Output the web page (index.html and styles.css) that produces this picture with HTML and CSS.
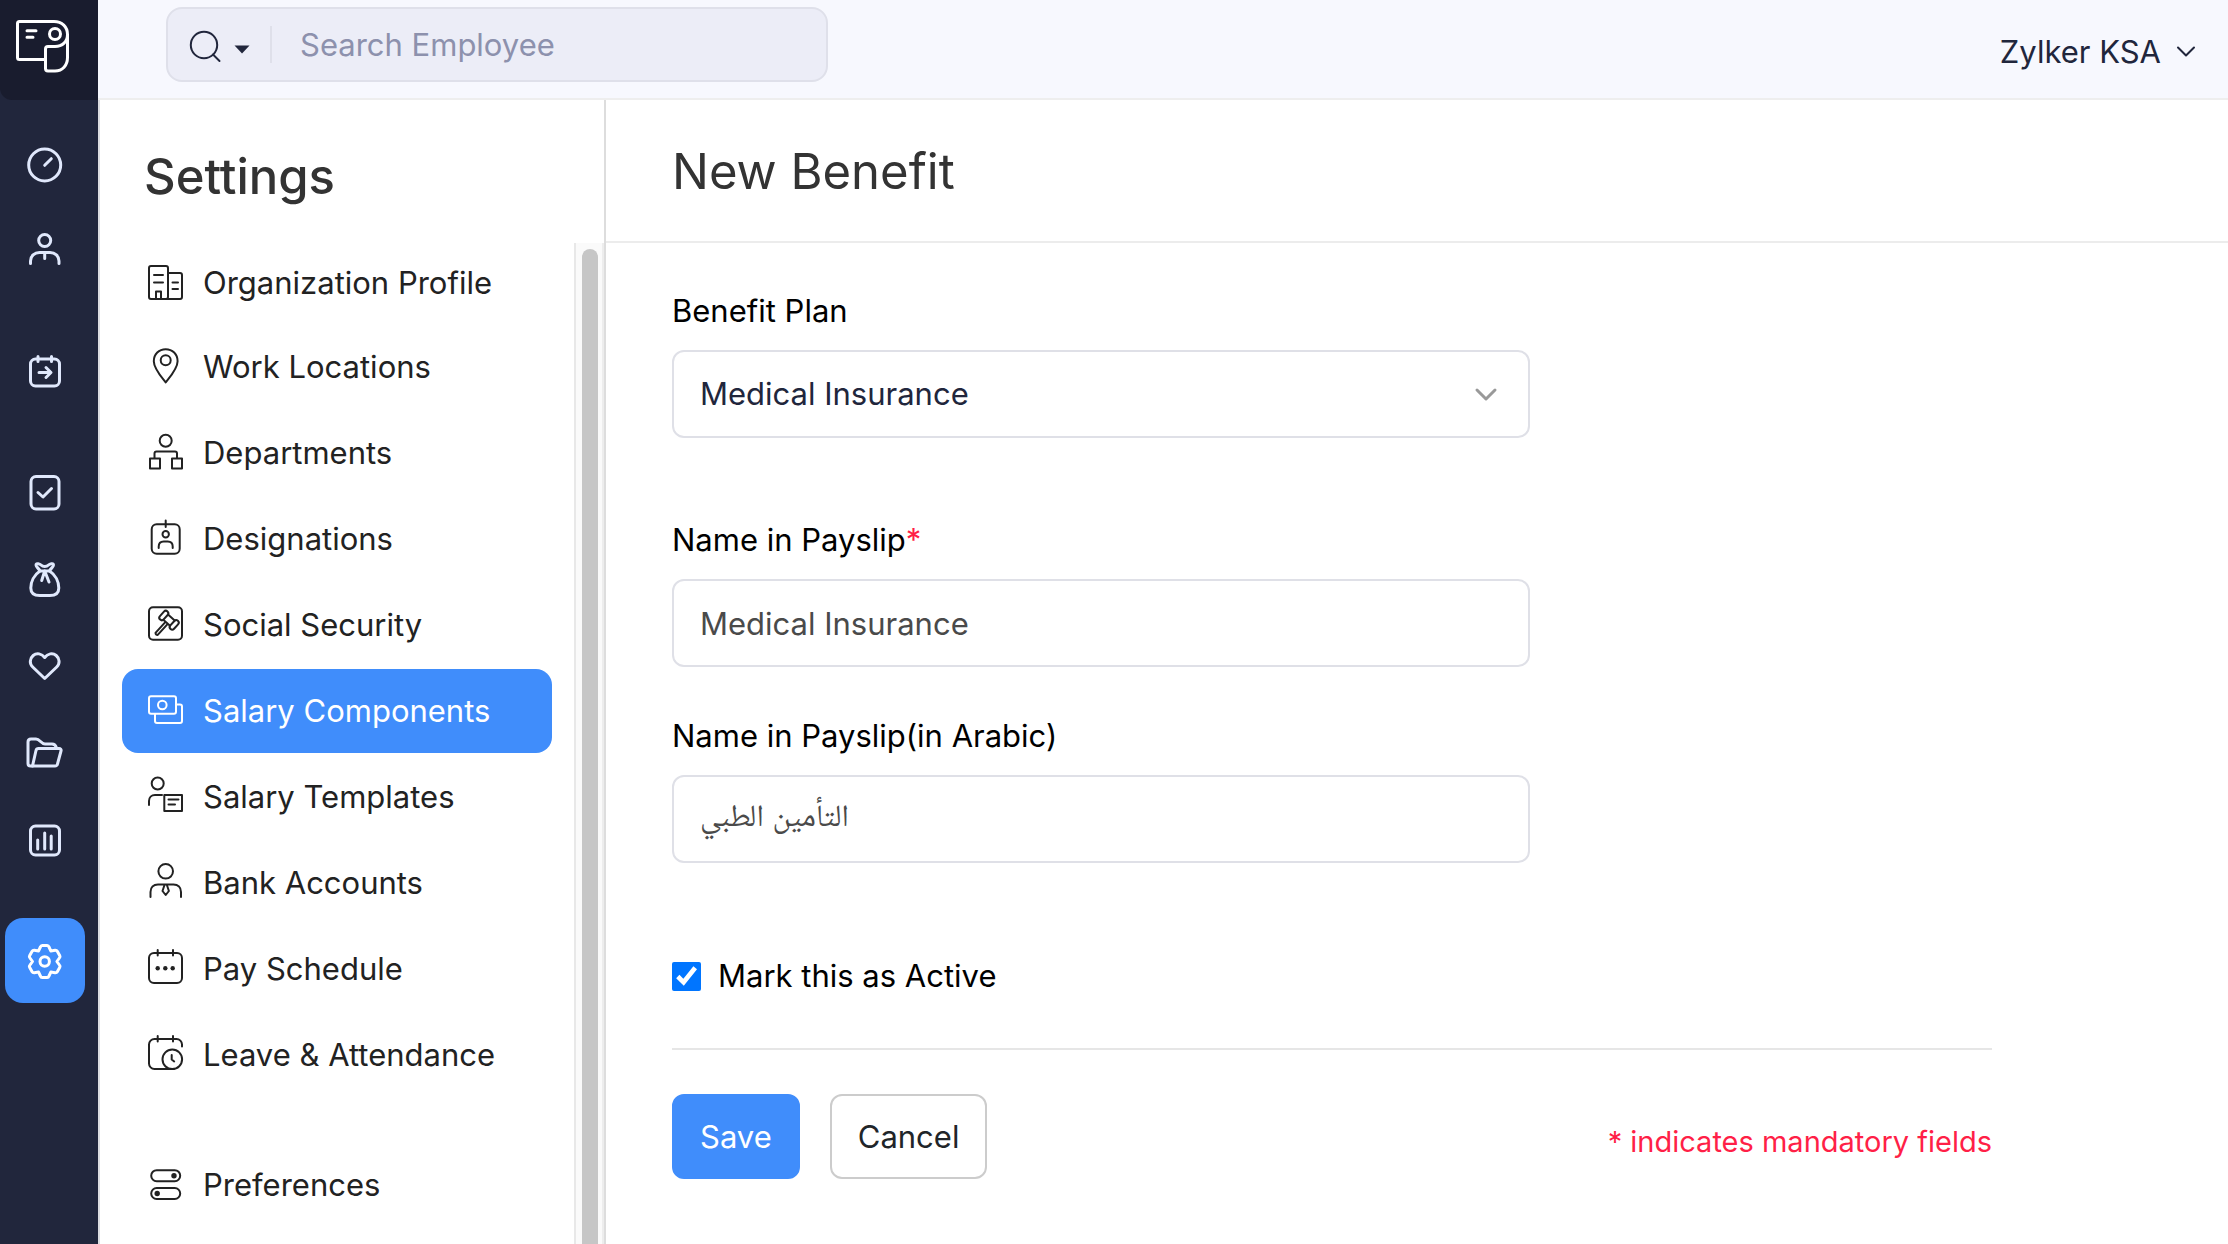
FILE: index.html
```html
<!DOCTYPE html>
<html lang="en">
<head>
    <meta charset="UTF-8">
    <meta name="viewport" content="width=device-width, initial-scale=1.0">
    <title>New Benefit | Settings</title>
    <link rel="stylesheet" href="styles.css">
</head>
<body>
    <!-- Left icon rail -->
    <aside class="rail">
        <a href="#" class="logo" aria-label="Home">
            <svg width="98" height="100" viewBox="0 0 98 100">
                <path d="M45 59.5H19.5a2 2 0 0 1-2-2V23.5a2 2 0 0 1 2-2H54c8 0 13.5 5.5 13.5 13v23c0 8-5 13.5-12.5 13.5h-7a2.5 2.5 0 0 1-2.5-2.5V49a2.5 2.5 0 0 1 2.5-2.5h7c7.5 0 12.5-5 12.5-12"/>
                <circle cx="55" cy="34" r="5.5"/>
                <path d="M27 30.7h9M27 37.3h6"/>
            </svg>
        </a>
        <nav class="rail-nav" aria-label="Main">
            <div class="rail-group rail-group-top">
                <a href="#" class="rail-item" aria-label="Dashboard">
                    <svg viewBox="0 0 38 38"><circle cx="18.7" cy="19" r="16"/><path d="M18.7 19.3l6.6-6.6"/></svg>
                </a>
                <a href="#" class="rail-item" aria-label="Employees">
                    <svg viewBox="0 0 38 38"><circle cx="18.7" cy="9.5" r="6"/><path d="M4.5 32.5V30c0-5 4-8.5 9-8.5h10.5c5 0 9 3.5 9 8.5v2.5M18.7 21.5v6"/></svg>
                </a>
            </div>
            <div class="rail-group">
                <a href="#" class="rail-item" aria-label="Pay Runs">
                    <svg viewBox="0 0 38 38"><rect x="4.5" y="7" width="29" height="27" rx="5"/><path d="M12 4.5v5M25.5 4.5v5M13 20.5h11.5M20 15.5l5 5-5 5"/></svg>
                </a>
            </div>
            <div class="rail-group">
                <a href="#" class="rail-item" aria-label="Approvals">
                    <svg viewBox="0 0 38 38"><rect x="5" y="3.5" width="28" height="32.5" rx="5"/><path d="M12 19.5l5 4.5 8.5-8.5"/></svg>
                </a>
                <a href="#" class="rail-item" aria-label="Loans">
                    <svg viewBox="0 0 38 38"><path d="M14 11C8 15 4.8 22 4.8 28c0 6 4 7.5 9 7.5h10c5 0 9-1.5 9-7.5 0-6-3.2-13-9.2-17z"/><path d="M14 11c-1.5-3-4-4-4-6 0-2.5 4-1 5 0s2.5 1.5 3.7 1.5S21.500 6 22.500 5s5-2.5 5 0c0 2-2.5 3-4 6M18.7 11l-3 9.5M18.7 11l4.3 11"/></svg>
                </a>
                <a href="#" class="rail-item" aria-label="Benefits">
                    <svg viewBox="0 0 38 38"><path d="M18.7 10.500c3-4 8-5 11.500-2s4 8 .5 11.500l-12 11.500-12-11.500C3.200 16.500 3.700 11.500 7.200 8.500s8.500-2 11.500 2z"/></svg>
                </a>
                <a href="#" class="rail-item" aria-label="Documents">
                    <svg viewBox="0 0 38 38"><path d="M6.5 32h-2C3 32 2 31 2 29.500V8c0-2 1.500-3 3-3h5c4 0 5 5 9 5h7c3 0 4 2 4.500 4"/><path d="M12.500 14.500H33c1.500 0 2.500 1 2 2.500l-3.500 13c-.3 1.300-1.200 2-2.500 2H6.500L10 16.500c.3-1.300 1-2 2.500-2z"/></svg>
                </a>
                <a href="#" class="rail-item" aria-label="Reports">
                    <svg viewBox="0 0 38 38"><rect x="4.5" y="5" width="29" height="29" rx="5"/><path d="M11.7 19v9M18.7 12v16M25.2 15v13"/></svg>
                </a>
            </div>
            <div class="rail-group">
                <a href="#" class="rail-item active" aria-label="Settings">
                    <svg viewBox="0 0 38 38"><g transform="translate(18.7 19.5)"><path d="M-6.1-10.6L-4.3-14.5Q-3.8-16-2.5-16H2.5Q3.8-16 4.3-14.5L6.1-10.6L10.4-11.2Q12-11.3 12.6-10.2L15.1-5.8Q15.8-4.6 14.7-3.5L12.2 0L14.7 3.5Q15.8 4.6 15.1 5.8L12.6 10.2Q12 11.3 10.4 11.2L6.1 10.6L4.3 14.5Q3.8 16 2.5 16H-2.5Q-3.8 16-4.3 14.5L-6.1 10.6L-10.4 11.2Q-12 11.3-12.6 10.2L-15.1 5.8Q-15.8 4.6-14.7 3.5L-12.2 0L-14.7-3.5Q-15.8-4.6-15.1-5.8L-12.6-10.2Q-12-11.3-10.4-11.2Z"/><circle r="4.7"/></g></svg>
                </a>
            </div>
        </nav>
    </aside>

    <div class="page">
        <!-- Top bar -->
        <header class="topbar">
            <form class="search" role="search">
                <button type="button" class="search-type" aria-label="Search category">
                    <svg width="54" height="36" viewBox="0 0 54 36">
                        <circle cx="20" cy="18" r="13.2"/><path d="M29 27.500l6.500 6.500"/><path class="caret" d="M50.500 18.500h15l-7.500 8z"/>
                    </svg>
                </button>
                <input type="search" placeholder="Search Employee" aria-label="Search Employee">
            </form>
            <button type="button" class="org-switch">
                Zylker KSA
                <svg width="18" height="12" viewBox="0 0 18 12"><path d="M1 1.500l8 8 8-8"/></svg>
            </button>
        </header>

        <div class="content">
            <!-- Settings menu -->
            <aside class="settings">
                <h2>Settings</h2>
                <div class="settings-scroll">
                    <ul>
                        <li><a href="#">
                            <svg viewBox="0 0 38 38"><rect x="2" y="2" width="19" height="33" rx="2"/><path d="M21 9h12a2 2 0 0 1 2 2v22a2 2 0 0 1-2 2H19M7 11h9M7 18.5h9M25.5 18.5h5.5M25.5 25h5.5M9 35v-7.500h5V35"/></svg>
                            Organization Profile</a></li>
                        <li><a href="#">
                            <svg viewBox="0 0 38 38"><path d="M18.7 34.5C14.5 29 6.8 20.5 6.8 13.2c0-7 5.2-12 11.900-12s11.900 5 11.900 12c0 7.300-7.700 15.800-11.900 21.300z"/><circle cx="18.7" cy="12.2" r="5"/></svg>
                            Work Locations</a></li>
                        <li><a href="#">
                            <svg viewBox="0 0 38 38"><circle cx="18.7" cy="6.7" r="6"/><path d="M3 24.5h10v10H3zM25 24.5h10v10H25zM7.5 24v-4.500q0-2 2-2h18.500q2 0 2 2V24"/></svg>
                            Departments</a></li>
                        <li><a href="#">
                            <svg viewBox="0 0 38 38"><rect x="4.7" y="4.2" width="28" height="29.5" rx="5"/><circle cx="18.7" cy="14.3" r="3.2"/><path d="M18.7.5v6.500M11.700 28v-1.500c0-3 2-5 5-5h4c3 0 5 2 5 5V28"/></svg>
                            Designations</a></li>
                        <li><a href="#">
                            <svg viewBox="0 0 38 38"><rect x="2" y="1.2" width="33" height="32.5" rx="4"/><g transform="translate(22 14.2) rotate(42)"><rect x="-9.5" y="-5.5" width="5" height="11" rx="2.5"/><rect x="4.5" y="-5.5" width="5" height="11" rx="2.5"/><path d="M-4.500-3.500h9M-4.500 3.500h9M-1.500 3.500v15q1.500 1.500 3 0v-15"/></g></svg>
                            Social Security</a></li>
                        <li><a href="#" class="active">
                            <svg viewBox="0 0 38 38"><rect x="2" y="4.2" width="27" height="17.5" rx="2"/><circle cx="15.3" cy="13" r="4.3"/><path d="M29.500 12.500h3.500a2 2 0 0 1 2 2V29a2 2 0 0 1-2 2H10a2 2 0 0 1-2-2v-7"/></svg>
                            Salary Components</a></li>
                        <li><a href="#">
                            <svg viewBox="0 0 38 38"><circle cx="10.7" cy="5.5" r="6"/><path d="M2 27v-4c0-3.500 2.500-6 6-6h7M17.300 17H35v16H17.300zM21.500 21.500h10M21.500 26.500h6.500"/></svg>
                            Salary Templates</a></li>
                        <li><a href="#">
                            <svg viewBox="0 0 38 38"><circle cx="18.7" cy="7.3" r="7.3"/><path d="M3.500 33v-5c0-4.500 3-7.500 7.500-7.500h15.500c4.500 0 7.500 3 7.500 7.500v5M17.500 21l-2 6 3.200 4 3.200-4-2-6"/></svg>
                            Bank Accounts</a></li>
                        <li><a href="#">
                            <svg viewBox="0 0 38 38"><rect x="2" y="3" width="33" height="30" rx="5"/><path d="M10.700 0v5.500M26 0v5.500"/><g class="dots"><circle cx="10.7" cy="18.3" r="2.2"/><circle cx="18.3" cy="18.3" r="2.2"/><circle cx="25.7" cy="18.3" r="2.2"/></g></svg>
                            Pay Schedule</a></li>
                        <li><a href="#">
                            <svg viewBox="0 0 38 38"><path d="M25 33H7.500a5.500 5.500 0 0 1-5.500-5.500v-19A5.500 5.500 0 0 1 7.500 3h22A5.500 5.500 0 0 1 35 8.500V10.500M10.700 0v5.500M26 0v5.500M24.700 19v4.500l2.500 2"/><circle cx="25.3" cy="23.3" r="9.8"/></svg>
                            Leave &amp; Attendance</a></li>
                        <li class="section-start"><a href="#">
                            <svg viewBox="0 0 38 38"><rect x="4.2" y="4.2" width="29" height="11" rx="5.5"/><rect x="4.2" y="22" width="29" height="11" rx="5.5"/><g class="dots"><circle cx="27" cy="9.7" r="2.7"/><circle cx="10.2" cy="27.5" r="2.7"/></g></svg>
                            Preferences</a></li>
                    </ul>
                    <div class="scroll-track"><div class="scroll-thumb"></div></div>
                </div>
            </aside>

            <!-- Benefit form -->
            <main class="main">
                <h1>New Benefit</h1>
                <form class="benefit-form">
                    <div class="field plan-field">
                        <label for="plan">Benefit Plan</label>
                        <div class="select-wrap">
                            <select id="plan" class="control">
                                <option selected>Medical Insurance</option>
                            </select>
                            <svg width="24" height="16" viewBox="0 0 24 16"><path d="M3 3l9 9 9-9"/></svg>
                        </div>
                    </div>
                    <div class="field">
                        <label for="name">Name in Payslip<span class="required">*</span></label>
                        <input type="text" id="name" class="control" value="Medical Insurance" required>
                    </div>
                    <div class="field">
                        <label for="name-ar">Name in Payslip(in Arabic)</label>
                        <input type="text" id="name-ar" class="control arabic" value="التأمين الطبي">
                    </div>
                    <div class="check">
                        <input type="checkbox" id="is-active" checked>
                        <label for="is-active">Mark this as Active</label>
                    </div>
                    <div class="actions">
                        <button type="submit" class="btn btn-primary">Save</button>
                        <button type="button" class="btn">Cancel</button>
                        <p class="note">* indicates mandatory fields</p>
                    </div>
                </form>
            </main>
        </div>
    </div>
</body>
</html>
```
FILE: styles.css
```css
* {
    box-sizing: border-box;
}
body {
    margin: 0;
    height: 100vh;
    display: flex;
    overflow: hidden;
    font-family: Inter, "Liberation Sans", sans-serif;
    font-size: 31px;
    line-height: 40px;
    color: #222;
    background-color: #fff;
}
a {
    color: inherit;
    text-decoration: none;
}
button,
input,
select {
    font: inherit;
    color: inherit;
}
svg {
    flex: none;
    display: block;
    overflow: visible;
    fill: none;
    stroke: currentColor;
    stroke-width: 2;
    stroke-linecap: round;
    stroke-linejoin: round;
}

/* Icon rail */
.rail {
    flex: none;
    width: 98px;
    background-color: #21263c;
    color: #e0e8fc;
}
.logo {
    display: block;
    height: 100px;
    background-color: #191c2e;
    border-bottom-left-radius: 12px;
    color: #fff;
}
.logo svg {
    stroke-width: 3;
}
.rail-nav {
    display: flex;
    flex-direction: column;
    gap: 36px;
    padding: 22px 13px 0 5px;
}
.rail-group {
    display: flex;
    flex-direction: column;
    gap: 2px;
}
.rail-group-top {
    gap: 0;
}
.rail-item {
    height: 85px;
    display: flex;
    align-items: center;
    justify-content: center;
    border-radius: 18px;
}
.rail-item.active {
    background-color: #408dfb;
    color: #fff;
}
.rail-item svg {
    width: 38px;
    height: 38px;
    stroke-width: 3;
}

/* Top bar */
.page {
    flex: 1;
    min-width: 0;
    display: flex;
    flex-direction: column;
}
.topbar {
    flex: none;
    height: 100px;
    display: flex;
    align-items: flex-start;
    justify-content: space-between;
    padding: 7px 33px 0 68px;
    background-color: #f7f8fe;
    border-bottom: 2px solid #eee;
}
.search {
    width: 662px;
    height: 75px;
    display: flex;
    align-items: center;
    background-color: #ecedf7;
    border: 2px solid #dfe0ea;
    border-radius: 16px;
}
.search-type {
    height: 37px;
    width: 104px;
    padding: 0 0 0 16px;
    border: 0;
    border-right: 2px solid #dfe0ea;
    background: none;
    color: #21263c;
}
.search-type .caret {
    fill: currentColor;
    stroke: none;
}
.search input {
    flex: 1;
    min-width: 0;
    padding: 0 28px;
    border: 0;
    background: none;
    outline: none;
}
.search input::placeholder {
    color: #8d91ad;
}
.org-switch {
    display: flex;
    align-items: center;
    gap: 16px;
    margin-top: 25px;
    padding: 0;
    border: 0;
    background: none;
    color: #21263c;
}

/* Settings menu */
.content {
    flex: 1;
    min-height: 0;
    display: flex;
}
.settings {
    flex: none;
    width: 508px;
    display: flex;
    flex-direction: column;
    border-left: 2px solid #dcdde1;
    border-right: 2px solid #ddd;
}
.settings h2 {
    margin: 0;
    padding: 47px 0 34px 44px;
    font-size: 49px;
    line-height: 60px;
    font-weight: 500;
    color: #333;
}
.settings-scroll {
    flex: 1;
    min-height: 0;
    display: flex;
}
.settings ul {
    flex: 1;
    margin: 0;
    padding: 0 22px;
    list-style: none;
}
.settings li + li + li {
    margin-top: 2px;
}
.settings li.section-start {
    margin-top: 46px;
}
.settings li a {
    height: 84px;
    display: flex;
    align-items: center;
    gap: 18px;
    padding-left: 25px;
    border-radius: 16px;
}
.settings li a.active {
    background-color: #408dfb;
    color: #fff;
}
.settings li svg {
    width: 38px;
    height: 38px;
}
.settings .dots {
    fill: currentColor;
    stroke: none;
}
.scroll-track {
    width: 30px;
    margin-top: 2px;
    padding: 6px 4px 0 6px;
    background-color: #fafafa;
    border-left: 2px solid #e8e8e8;
    border-right: 2px solid #ededed;
}
.scroll-thumb {
    width: 16px;
    height: 100%;
    background-color: #c6c6c6;
    border-radius: 8px 8px 0 0;
}

/* Benefit form */
.main {
    flex: 1;
    min-width: 0;
}
.main h1 {
    margin: 0;
    padding: 42px 66px 39px;
    border-bottom: 2px solid #ececec;
    font-size: 49px;
    line-height: 60px;
    font-weight: 400;
    color: #333;
}
.benefit-form {
    max-width: 1386px;
    padding: 48px 0 0 66px;
    color: #000;
}
.field {
    width: 65%;
    margin-bottom: 49px;
}
.plan-field {
    margin-bottom: 82px;
}
.field label {
    display: block;
    margin-bottom: 19px;
}
.required {
    color: #ff1f47;
}
.control {
    display: block;
    width: 100%;
    height: 88px;
    padding: 0 26px;
    border: 2px solid #dfe0e7;
    border-radius: 12px;
    background-color: #fff;
    color: #4a4a4a;
    outline: none;
    appearance: none;
}
select.control {
    color: #21263c;
}
.select-wrap {
    position: relative;
}
.select-wrap svg {
    position: absolute;
    top: 37px;
    right: 32px;
    color: #999;
    stroke-width: 3;
    pointer-events: none;
}
.arabic {
    font-family: Inter, "Noto Naskh Arabic", "Noto Sans Arabic", "DejaVu Sans", sans-serif;
}
.check {
    display: flex;
    align-items: center;
    gap: 17px;
    padding: 44px 0 52px;
}
.check input {
    width: 29px;
    height: 29px;
    margin: 0;
    accent-color: #0075ff;
}
.actions {
    display: flex;
    gap: 30px;
    padding-top: 44px;
    border-top: 2px solid #e6e6e6;
}
.btn {
    height: 85px;
    padding: 0 26px;
    border: 2px solid #ccc;
    border-radius: 12px;
    background-color: #fff;
    color: #212529;
}
.btn-primary {
    border-color: #408dfb;
    background-color: #408dfb;
    color: #fff;
}
.note {
    margin: 28px 0 0 auto;
    font-size: 29px;
    color: #ff1f47;
}
```
